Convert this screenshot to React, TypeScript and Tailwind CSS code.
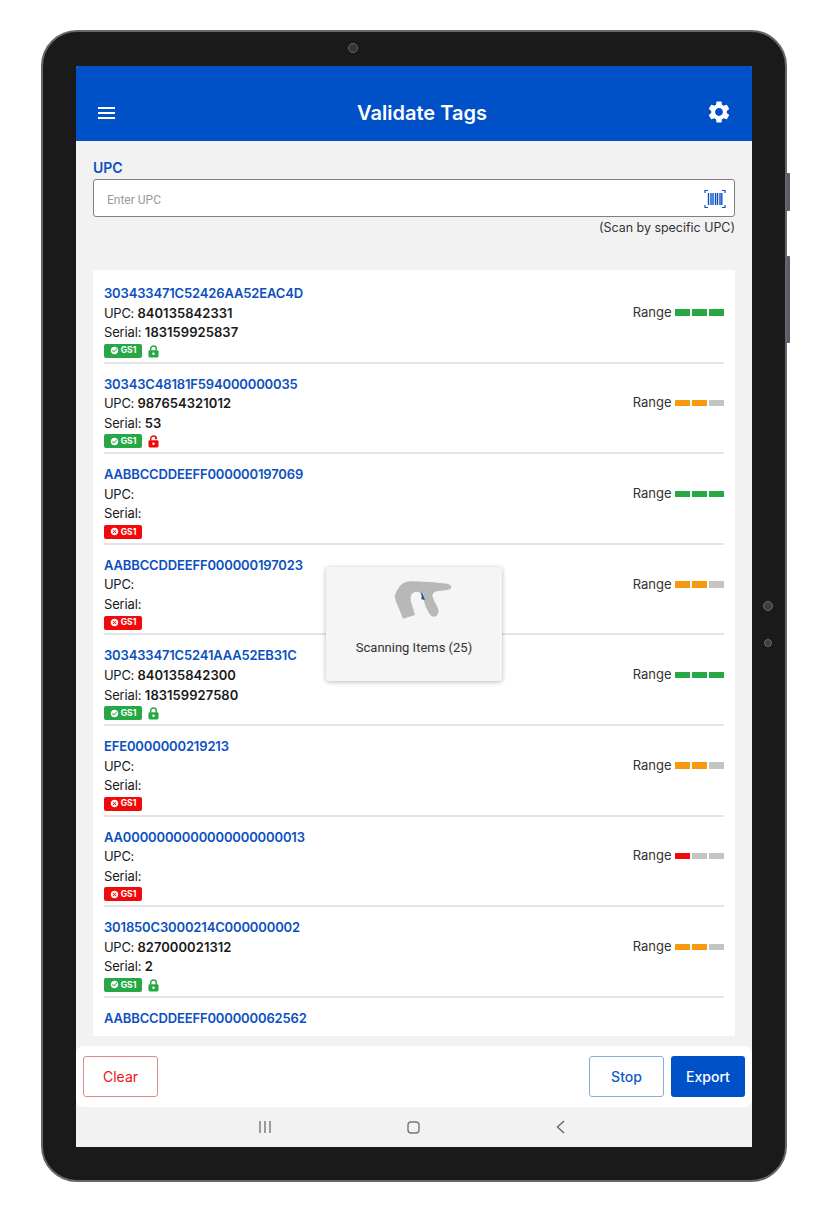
import React from "react";
import { MdSettings, MdCheckCircle, MdCancel } from "react-icons/md";

type Row = { id: string; upc?: string; serial?: string; gs1: boolean; lock?: "g" | "r"; range: [string, string, string] };
const G = "bg-[#28a745]";
const O = "bg-[#f7990c]";
const N = "bg-[#c4c4c4]";
const R = "bg-[#f20a0a]";

const rows: Row[] = [
  { id: "303433471C52426AA52EAC4D", upc: "840135842331", serial: "183159925837", gs1: true, lock: "g", range: [G, G, G] },
  { id: "30343C48181F594000000035", upc: "987654321012", serial: "53", gs1: true, lock: "r", range: [O, O, N] },
  { id: "AABBCCDDEEFF000000197069", gs1: false, range: [G, G, G] },
  { id: "AABBCCDDEEFF000000197023", gs1: false, range: [O, O, N] },
  { id: "303433471C5241AAA52EB31C", upc: "840135842300", serial: "183159927580", gs1: true, lock: "g", range: [G, G, G] },
  { id: "EFE0000000219213", gs1: false, range: [O, O, N] },
  { id: "AA0000000000000000000013", gs1: false, range: [R, N, N] },
  { id: "301850C3000214C000000002", upc: "827000021312", serial: "2", gs1: true, lock: "g", range: [O, O, N] },
];

function Lock({ open }: { open?: boolean }) {
  const c = open ? "#f20a0a" : "#28a745";
  return (
    <svg width="11" height="13" viewBox="0 0 12 14" className="mt-[1px]">
      <path d={open ? "M3 6V3.8C3 2.2 4.3 1 6 1C7.7 1 9 2.2 9 3.8H7.6" : "M3 6V3.8C3 2.2 4.3 1 6 1C7.7 1 9 2.2 9 3.8V6"} fill="none" stroke={c} strokeWidth="1.6" />
      <rect x="0.5" y="5.5" width="11" height="8" rx="1.5" fill={c} />
      <circle cx="6" cy="9.5" r="1.3" fill="#ffffff" />
    </svg>
  );
}

function TagRow({ r }: { r: Row }) {
  return (
    <div className="h-[90.6px] pt-[10px] border-b-2 border-[#e4e4e4] flex justify-between shrink-0">
      <div className="flex flex-col">
        <div className="h-[19.6px] text-[13px] leading-[20px] font-semibold text-[#0b50c0] tracking-[-0.15px]">{r.id}</div>
        <div className="h-[19.6px] text-[13px] leading-[20px] text-[#1a1a1a]">
          <span className="tracking-[-0.3px]">UPC: </span>
          <span className="font-semibold tracking-[0.05px]">{r.upc}</span>
        </div>
        <div className="h-[19.6px] text-[13px] leading-[20px] text-[#1a1a1a]">
          <span className="tracking-[-0.15px]">Serial: </span>
          <span className="font-semibold tracking-[0.05px]">{r.serial}</span>
        </div>
        <div className="flex items-center gap-[6px] h-[18px]">
          <div className={`w-[38px] h-[14px] rounded-[2px] flex items-center justify-center gap-[2px] text-white text-[8.5px] font-bold ${r.gs1 ? G : R}`}>
            {r.gs1 ? <MdCheckCircle size={9} /> : <MdCancel size={9} />}
            <span>GS1</span>
          </div>
          {r.lock === "g" && <Lock />}
          {r.lock === "r" && <Lock open />}
        </div>
      </div>
      <div className="flex items-center h-[20px] mt-[19.6px]">
        <span className="text-[13px] text-[#333333] mr-[3px]">Range</span>
        <div className="flex gap-[1.5px]">
          {r.range.map((c, i) => (
            <div key={i} className={`w-[15.5px] h-[6.5px] ${c}`} />
          ))}
        </div>
      </div>
    </div>
  );
}

export default function App() {
  return (
    <div className="w-[822px] h-[1218px] bg-white pt-[30px] pl-[41px]" style={{ fontFamily: "Inter, 'Liberation Sans', sans-serif" }}>
      <div className="relative w-[746px] h-[1152px] rounded-[36px] bg-[#1a1a1a] border-2 border-[#66666e] pt-[34px] pl-[33px]">
        <div className="absolute left-[744px] top-[141px] w-[3px] h-[38px] bg-[#5c5c66] rounded-r-[1px]" />
        <div className="absolute left-[744px] top-[224px] w-[3px] h-[87px] bg-[#5c5c66] rounded-r-[1px]" />
        <div className="absolute left-[305px] top-[11px] w-[10px] h-[10px] rounded-full bg-[#33333a] border border-[#666666]" />
        <div className="absolute left-[720px] top-[569px] w-[10px] h-[10px] rounded-full bg-[#3a3d48] border border-[#6a6a6a]" />
        <div className="absolute left-[721px] top-[607px] w-[8px] h-[8px] rounded-full bg-[#3a3d48] border border-[#6a6a6a]" />

        <div className="relative w-[676px] h-[1081px] bg-[#f2f2f2] flex flex-col overflow-hidden rounded-t-[3px]">
          <header className="h-[75px] bg-[#0050c8] shrink-0 flex items-end justify-between pl-[22px] pr-[20px] pb-[16px]">
            <svg width="17" height="12" viewBox="0 0 17 12" className="mb-[6px]">
              <rect x="0" y="0" width="17" height="2" fill="#fff" />
              <rect x="0" y="5" width="17" height="2" fill="#fff" />
              <rect x="0" y="10" width="17" height="2" fill="#fff" />
            </svg>
            <div className="text-white text-[20px] leading-[24px] font-semibold absolute left-[16px] right-0 top-[35px] text-center">Validate Tags</div>
            <MdSettings size={26} color="#fff" />
          </header>

          <div className="px-[17px] pt-[18px] shrink-0 flex flex-col">
            <label className="text-[14px] leading-[17px] font-semibold text-[#0b50c0]">UPC</label>
            <div className="mt-[3px] h-[38px] bg-white border-[1.5px] border-[#808080] rounded-[3px] flex items-center justify-between pl-[13px] pr-[8px]">
              <span className="text-[12px] text-[#9a9a9a] mt-[3px]" style={{ fontFamily: "Roboto, sans-serif" }}>Enter UPC</span>
              <svg width="22" height="20" viewBox="0 0 22 20" fill="none" className="mt-[1px]">
                <path d="M1 4V1.5H4M18 1.5H21V4M1 16V18.5H4M18 18.5H21V16" stroke="#0b50c0" strokeWidth="1.2" />
                <path d="M4.5 4V16M7 4V16M9 4V16M11.5 4V16M13.5 4V16M16 4V16M17.8 4V16" stroke="#0b50c0" strokeWidth="1.4" />
              </svg>
            </div>
            <div className="text-right text-[12.45px] leading-[15px] mt-[3px] text-[#333333]">(Scan by specific UPC)</div>
          </div>

          <div className="mx-[17px] mt-[35px] h-[766px] bg-white shrink-0 px-[11px] pt-[3px] flex flex-col overflow-hidden">
            {rows.map((r) => (
              <TagRow key={r.id} r={r} />
            ))}
            <div className="pt-[10px] h-[30px] text-[13px] leading-[20px] font-semibold text-[#0b50c0] tracking-[-0.15px]">AABBCCDDEEFF000000062562</div>
          </div>

          <div className="absolute left-[250px] top-[501px] w-[176px] h-[114px] bg-[#f5f5f5] rounded-[3px] shadow-[0_1px_5px_rgba(0,0,0,0.28)] flex flex-col items-center pt-[13px]">
            <svg width="60" height="40" viewBox="220 60 180 120" className="ml-[17px]">
              <path d="M225 108Q235 80 250 70Q262 62 280 64L340 67L383 71Q396 76 395 82Q392 90 380 90L352 94Q338 98 338 108L344 124Q356 146 357 152Q356 168 342 170Q334 170 328 160L318 140L308 108Q302 94 290 95Q276 96 273 110Q272 122 277 135L286 165L250 176Q244 160 238 146L228 122Z" fill="#b8b8b8" />
              <path d="M303 97Q311 103 312 110L316 120L305 118L306 108Z" fill="#1f4fa8" />
            </svg>
            <div className="mt-[20px] text-[13px] text-[#333333] leading-[16px]" style={{ fontFamily: "Roboto, sans-serif" }}>Scanning Items (25)</div>
          </div>

          <div className="mt-[10px] h-[61px] bg-white rounded-[8px] shrink-0 flex items-center justify-between pl-[7px] pr-[7px]">
            <button className="w-[75px] h-[41px] border-[1.5px] border-[#e08a8e] rounded-[3px] text-[14px] text-[#ee1111]">Clear</button>
            <div className="flex gap-[7px]">
              <button className="w-[75px] h-[41px] border-[1.5px] border-[#8aaedb] rounded-[3px] text-[14px] font-medium text-[#0f5bc8]">Stop</button>
              <button className="w-[74px] h-[41px] bg-[#0050c8] rounded-[3px] text-[14px] font-medium text-white">Export</button>
            </div>
          </div>

          <div className="flex-1 bg-[#f2f2f2] flex items-center pl-[183px]">
            <svg width="13" height="12" viewBox="0 0 13 12"><path d="M1 0V12M6 0V12M11 0V12" stroke="#777777" strokeWidth="1.4" /></svg>
            <svg width="13" height="13" viewBox="0 0 13 13" className="ml-[135px]"><rect x="1" y="1" width="11" height="11" rx="3" fill="none" stroke="#777777" strokeWidth="1.4" /></svg>
            <svg width="9" height="14" viewBox="0 0 9 14" className="ml-[136px]"><path d="M8 1L1.5 7L8 13" fill="none" stroke="#666666" strokeWidth="1.4" /></svg>
          </div>
        </div>
      </div>
    </div>
  );
}
